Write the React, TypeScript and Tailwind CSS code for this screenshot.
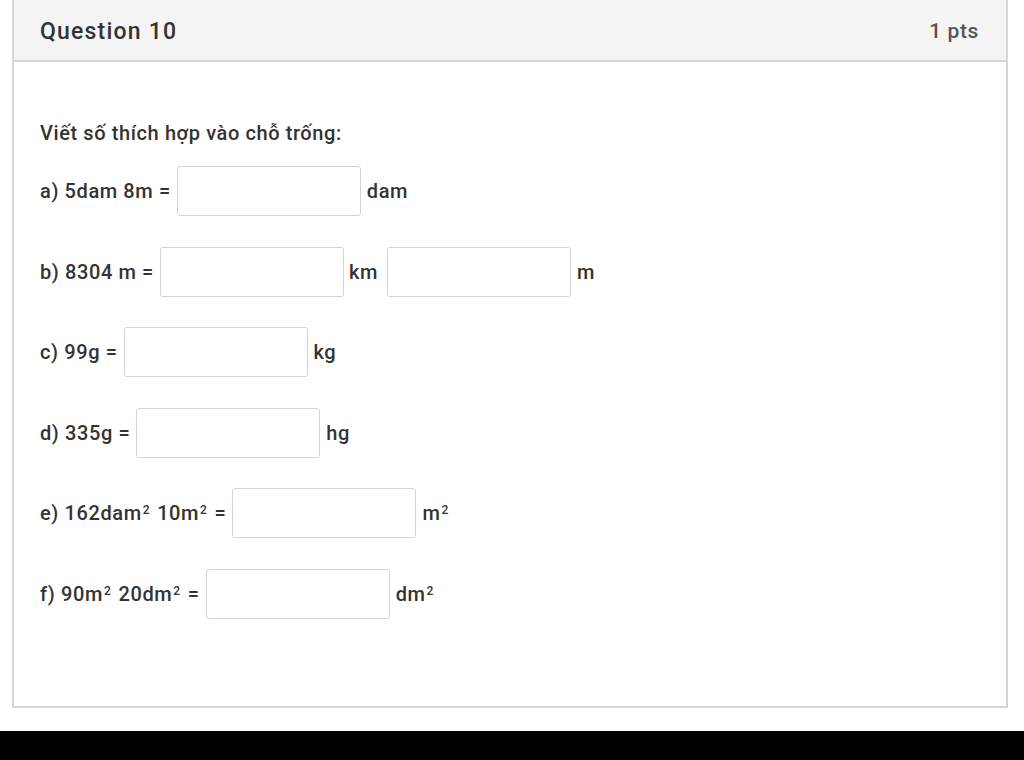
import React from "react";

function Box() {
  return <div className="h-[50px] w-[184px] shrink-0 rounded-[3px] border border-[#d4d4d4] bg-white" />;
}

function Row({ children }: { children: React.ReactNode }) {
  return <div className="flex h-[50px] items-center">{children}</div>;
}

function Sq() {
  return <sup className="ml-[1px] mr-[1.5px] text-[12px]">2</sup>;
}

export default function App() {
  return (
    <div className="h-[760px] w-[1024px] overflow-hidden bg-white" style={{ fontFamily: "Roboto, 'Noto Sans', sans-serif" }}>
      <div className="flex h-[731px] flex-col bg-white">
        <div className="ml-[12px] mr-[16px] flex h-[708px] flex-col border-x-2 border-b-2 border-[#d6d6d6]">
          <div className="flex h-[62px] shrink-0 items-center justify-between border-b-2 border-[#d6d6d6] bg-[#f4f4f4] pl-[26px] pr-[27px] pt-[4px]">
            <span className="text-[23px] font-medium tracking-[1.2px] text-[#333]">Question 10</span>
            <span className="text-[21px] font-medium tracking-[0.6px] text-[#555]">1 pts</span>
          </div>
          <div className="flex flex-col pl-[26px] pt-[59px] text-[20px] tracking-[0.6px] text-[#333]">
            <p className="h-[24px] leading-[24px] font-medium">Viết số thích hợp vào chỗ trống:</p>
            <div className="mt-[21px] flex flex-col gap-[30.5px] font-medium">
              <Row>
                <span className="mr-[6px]">a) 5dam 8m =</span>
                <Box />
                <span className="ml-[6px]">dam</span>
              </Row>
              <Row>
                <span className="mr-[6px]">b) 8304 m =</span>
                <Box />
                <span className="ml-[5px] mr-[9px]">km</span>
                <Box />
                <span className="ml-[6px]">m</span>
              </Row>
              <Row>
                <span className="mr-[6px]">c) 99g =</span>
                <Box />
                <span className="ml-[6px]">kg</span>
              </Row>
              <Row>
                <span className="mr-[6px]">d) 335g =</span>
                <Box />
                <span className="ml-[6px]">hg</span>
              </Row>
              <Row>
                <span className="mr-[6px]">
                  e) 162dam<Sq /> 10m<Sq /> =
                </span>
                <Box />
                <span className="ml-[6px]">
                  m<Sq />
                </span>
              </Row>
              <Row>
                <span className="mr-[6px]">
                  f) 90m<Sq /> 20dm<Sq /> =
                </span>
                <Box />
                <span className="ml-[6px]">
                  dm<Sq />
                </span>
              </Row>
            </div>
          </div>
        </div>
      </div>
      <div className="h-[29px] bg-black" />
    </div>
  );
}
